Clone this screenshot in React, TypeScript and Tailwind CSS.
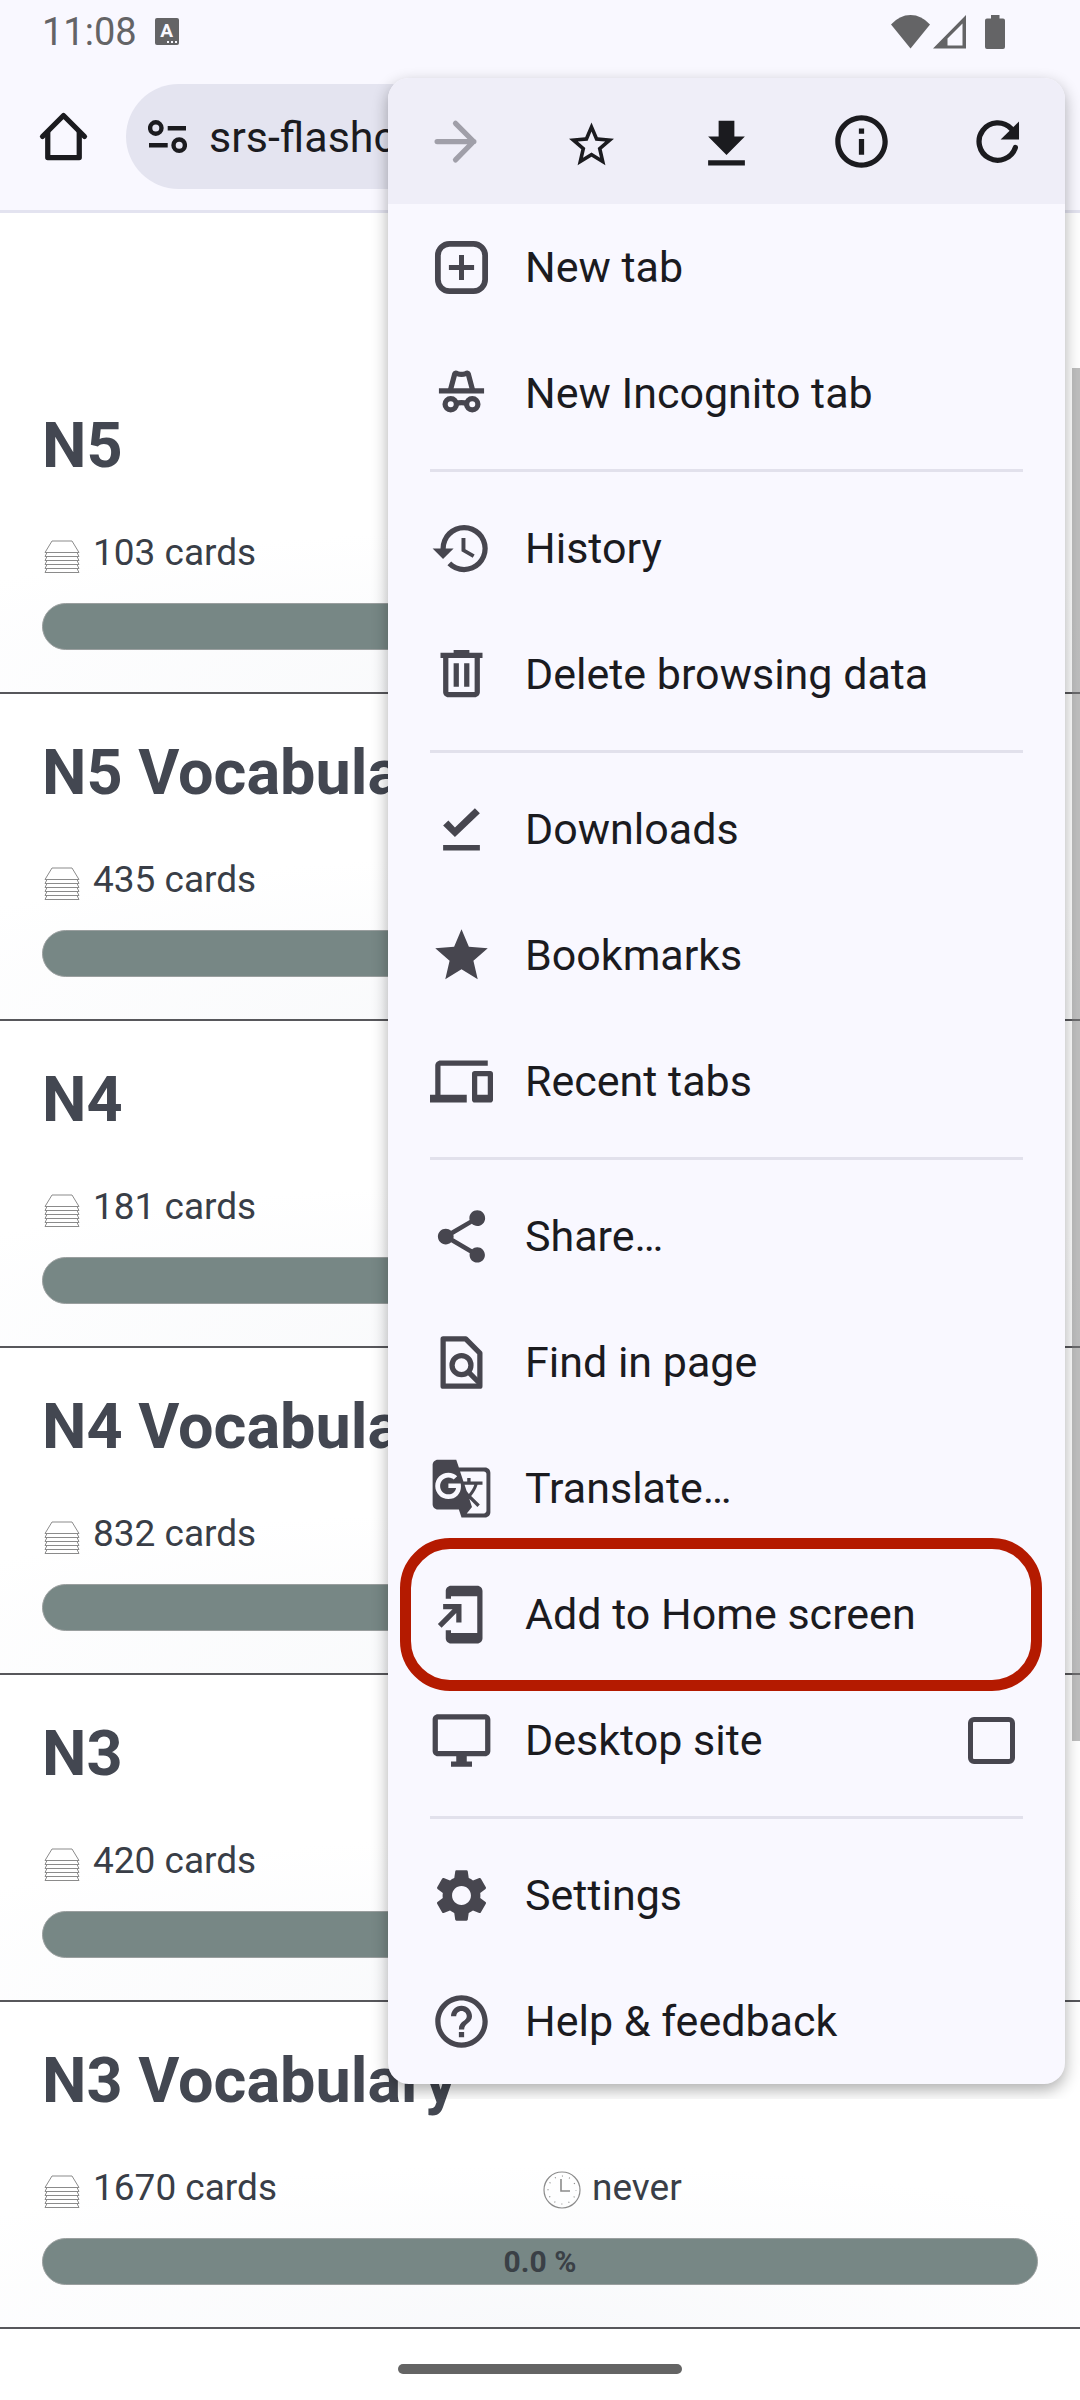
import React from "react";
import {
  MdAddToHomeScreen,
  MdDevices,
  MdGTranslate,
  MdHelpOutline,
  MdHistory,
  MdInfoOutline,
  MdSettings,
  MdShare,
  MdStar,
} from "react-icons/md";

const ICON = "size-[63px] shrink-0";

function HomeIcon() {
  return (
    <svg viewBox="0 0 24 24" className={ICON} fill="none" stroke="currentColor" strokeWidth="2" strokeLinecap="round" strokeLinejoin="round" aria-hidden="true">
      <path d="M4 12 12 4l8 8" />
      <path d="M6 10.5V20h12v-9.5" />
    </svg>
  );
}

function TuneIcon() {
  return (
    <svg viewBox="0 0 39 34" className="h-[34px] w-[39px] shrink-0" fill="none" stroke="currentColor" strokeWidth="4.4" aria-hidden="true">
      <circle cx="7.8" cy="8" r="5.7" />
      <path d="M19.7 8.2H38M1 25.2h18.7" />
      <circle cx="31.2" cy="25.2" r="5.7" />
    </svg>
  );
}

function ForwardIcon() {
  return (
    <svg viewBox="0 0 24 24" className={ICON} fill="none" stroke="currentColor" strokeWidth="2" strokeLinecap="round" strokeLinejoin="round" aria-hidden="true">
      <path d="M5 12h14M12 5.1 18.900 12 12 19" />
    </svg>
  );
}

function StarOutlineIcon() {
  return (
    <svg viewBox="-2 -3.5 28 28" className={ICON} fill="currentColor" aria-hidden="true">
      <path d="m22 9.24-7.19-.62L12 2 9.19 8.63 2 9.24l5.46 4.73L5.82 21 12 17.27 18.18 21l-1.63-7.03L22 9.24zM12 15.4l-3.76 2.27 1-4.28-3.32-2.88 4.38-.38L12 6.1l1.71 4.04 4.38.38-3.32 2.88 1 4.28L12 15.4z" />
    </svg>
  );
}

function DownloadIcon() {
  return (
    <svg viewBox="0 -1.1 24 24" className={ICON} fill="currentColor" aria-hidden="true">
      <path d="M19 9h-4V3H9v6H5l7 7 7-7zM5 18v2h14v-2H5z" />
    </svg>
  );
}

function RefreshIcon() {
  return (
    <svg viewBox="0 0 24 24" className={ICON} aria-hidden="true">
      <path d="M17.2 7.1A7.1 7.1 0 1 0 18.8 14.3" fill="none" stroke="currentColor" strokeWidth="2" strokeLinecap="round" />
      <path d="M20.2 4.4v6.8h-7z" fill="currentColor" />
    </svg>
  );
}

function NewTabIcon() {
  return (
    <svg viewBox="0 0 24 24" className={ICON} fill="none" stroke="currentColor" strokeWidth="2.2" aria-hidden="true">
      <rect x="3" y="3" width="18" height="18" rx="4.4" />
      <path d="M12 7.2v9.6M7.2 12h9.6" strokeWidth="1.9" />
    </svg>
  );
}

function IncognitoIcon() {
  return (
    <svg viewBox="0 0 24 24" className={ICON} fill="none" stroke="currentColor" strokeWidth="2" strokeLinejoin="round" aria-hidden="true">
      <path d="M3.4 11h17.2" />
      <path d="M7.7 11 9.4 4.6c.2-.5.6-.4 1-.2q1.6.7 3.2 0c.4-.2.8-.3 1 .2L16.3 11" />
      <circle cx="7.9" cy="16.1" r="2.15" />
      <circle cx="16.1" cy="16.1" r="2.15" />
      <path d="M9.8 15.9q2.2-.9 4.4 0" />
    </svg>
  );
}

function TrashIcon() {
  return (
    <svg viewBox="0 0 24 24" className={ICON} fill="currentColor" fillRule="evenodd" aria-hidden="true">
      <path d="M15 3.7v-1H9v1H4v2h1v13c0 1.1.9 2 2 2h10c1.100 0 2-.9 2-2v-13h1v-2zM17 18.700H7v-13h10z" />
      <path d="M9 7.700h2v9H9zM13 7.700h2v9h-2z" />
    </svg>
  );
}

function DownloadsIcon() {
  return (
    <svg viewBox="0 0 24 24" className={ICON} fill="currentColor" aria-hidden="true">
      <path d="M5 10.5 7 8.6l2.5 2.6L17.1 3.9 19 5.8 9.5 14.9zM5 17.9h14v2.1H5z" />
    </svg>
  );
}

function FindIcon() {
  return (
    <svg viewBox="0 0 24 24" className={ICON} fill="none" stroke="currentColor" strokeWidth="2" strokeLinejoin="round" aria-hidden="true">
      <path d="M5 3h8.6L19 8.4V21H5z" />
      <circle cx="12" cy="13" r="3.6" />
      <path d="m14.6 15.6 4.4 4.4" />
    </svg>
  );
}

function DesktopIcon() {
  return (
    <svg viewBox="0 0 24 24" className={ICON} fill="currentColor" fillRule="evenodd" aria-hidden="true">
      <path d="M21 2H3c-1.1 0-2 .9-2 2v12c0 1.100.9 2 2 2h7v2H8v2h8v-2h-2v-2h7c1.100 0 2-.9 2-2V4c0-1.100-.9-2-2-2zm0 14H3V4h18z" />
    </svg>
  );
}

function StackIcon() {
  return (
    <svg viewBox="0 0 36 34" className="h-[34px] w-9 shrink-0" fill="none" stroke="#8b8b8b" strokeWidth="1" aria-hidden="true">
      <path d="M1 12.5h34L28 1H8z" />
      <path d="m1 16.5 2-4M35 16.5l-2-4M1 16.5h34M1 20.5l2-4M35 20.5l-2-4M1 20.5h34M1 24.5l2-4M35 24.5l-2-4M1 24.5h34M1 28.5l2-4M35 28.5l-2-4M1 28.5h34M1 32.5l2-4M35 32.5l-2-4M1 32.5h34" />
    </svg>
  );
}

function ClockIcon() {
  return (
    <svg viewBox="0 0 38 38" className="size-[38px] shrink-0" fill="none" stroke="#8b8b8b" strokeWidth="1.2" aria-hidden="true">
      <circle cx="19" cy="19" r="18" />
      <circle cx="19" cy="19" r="14" strokeDasharray="1 6.33" strokeDashoffset="0.5" />
      <path d="M18 8v12h9" strokeWidth="1.6" />
    </svg>
  );
}

function StatusBar() {
  return (
    <div className="flex h-[63px] items-center justify-between pr-[75px] pl-[42px] text-[#646466]">
      <div className="flex items-center gap-[18px]">
        <span className="text-[38px] leading-[44px]">11:08</span>
        <span className="relative flex h-[27px] w-6 justify-center rounded-xs bg-[#646466] font-bold text-[#f9f8ff]">
          <span className="text-[19px] leading-[26px]">A</span>
          <svg viewBox="0 0 10 2" className="absolute right-[2px] bottom-[2px] h-[2px] w-[10px]" fill="currentColor" aria-hidden="true">
            <path d="M0 0h2v2H0zM4 0h2v2H4zM8 0h2v2H8z" />
          </svg>
        </span>
      </div>
      <div className="flex items-center">
        <svg viewBox="0 0 39 34" className="h-[34px] w-[39px]" fill="currentColor" aria-hidden="true">
          <path d="M0 9.5Q8.5 0 19.5 0T39 9.5l-19.500 24z" />
        </svg>
        <svg viewBox="0 0 33 34" className="ml-[3px] h-[34px] w-[33px]" fill="currentColor" fillRule="evenodd" aria-hidden="true">
          <path d="M33 0v33.5H0zM29.5 8.5l-15 15v7h15z" />
        </svg>
        <svg viewBox="0 0 20 34" className="ml-[19px] h-[34px] w-5" fill="currentColor" aria-hidden="true">
          <path d="M6 0h8.5v3.5H18a2 2 0 0 1 2 2V32a2 2 0 0 1-2 2H2a2 2 0 0 1-2-2V5.500a2 2 0 0 1 2-2h4z" />
        </svg>
      </div>
    </div>
  );
}

function Toolbar() {
  return (
    <div className="flex items-center gap-[31px] border-b-[3px] border-[#e3e3f0] px-8 py-[21px] text-[#1b1b1f]">
      <button type="button" aria-label="Home">
        <HomeIcon />
      </button>
      <div className="flex h-[105px] flex-1 items-center gap-[22px] rounded-full bg-[#e4e4f0] pr-10 pl-[22px]">
        <TuneIcon />
        <input
          type="text"
          aria-label="Address"
          defaultValue="srs-flashcards"
          className="w-full min-w-0 flex-1 bg-transparent text-[43px] leading-[52px] outline-none"
        />
      </div>
    </div>
  );
}

type Deck = { name: string; cards: number; lastStudied?: string; progress?: string };

const DECKS: Deck[] = [
  { name: "N5", cards: 103 },
  { name: "N5 Vocabulary", cards: 435 },
  { name: "N4", cards: 181 },
  { name: "N4 Vocabulary", cards: 832 },
  { name: "N3", cards: 420 },
  { name: "N3 Vocabulary", cards: 1670, lastStudied: "never", progress: "0.0 %" },
];

function DeckRow({ name, cards, lastStudied, progress }: Deck) {
  return (
    <li className="border-b-2 border-[#57575b] bg-[radial-gradient(ellipse_70%_50%_at_50%_100%,#f8f9fb,#ffffff)] px-[42px] pt-[43px] pb-[42px]">
      <h2 className="text-[63px] leading-[72px] font-bold text-[#434751]">{name}</h2>
      <div className="mt-[47px] grid grid-cols-2 text-[37px] leading-[48px] text-[#393e47]">
        <span className="flex items-center gap-[13px] pl-[2px]">
          <span className="pt-2">
            <StackIcon />
          </span>
          {cards} cards
        </span>
        {lastStudied && (
          <span className="flex items-center gap-[11px] pl-[3px]">
            <span className="pt-1">
              <ClockIcon />
            </span>
            {lastStudied}
          </span>
        )}
      </div>
      <div
        role="progressbar"
        aria-label={name}
        aria-valuenow={0}
        className="mt-[26px] flex h-[47px] items-center justify-center rounded-full border border-[#9a9f9f] bg-[#778785] text-[30px] font-bold text-[#3a4046]"
      >
        {progress}
      </div>
    </li>
  );
}

function MenuItem({ icon, label }: { icon: React.ReactNode; label: string }) {
  return (
    <button type="button" className="flex h-[126px] w-full items-center gap-8 px-[42px] text-left">
      <span className="text-[#47464f]">{icon}</span>
      {label}
    </button>
  );
}

function Divider() {
  return <hr className="mx-[42px] my-[13px] border-t-[3px] border-[#e2e1ec]" />;
}

function Menu() {
  return (
    <div className="absolute top-0 right-0 overflow-hidden pt-[78px] pr-[15px] pb-[15px] pl-8">
      <nav aria-label="Browser menu" className="w-[677px] rounded-[21px] bg-[#f9f8ff] text-[43px] leading-[52px] text-[#1b1b1f] shadow-[0_6px_16px_rgba(0,0,0,0.32)]">
        <div className="grid h-[126px] grid-cols-5 place-items-center rounded-t-[21px] bg-[#efeef8]">
          <button type="button" aria-label="Forward" className="text-[#a09fa9]">
            <ForwardIcon />
          </button>
          <button type="button" aria-label="Bookmark">
            <StarOutlineIcon />
          </button>
          <button type="button" aria-label="Download">
            <DownloadIcon />
          </button>
          <button type="button" aria-label="Page info">
            <MdInfoOutline className={ICON} />
          </button>
          <button type="button" aria-label="Refresh">
            <RefreshIcon />
          </button>
        </div>
        <MenuItem icon={<NewTabIcon />} label="New tab" />
        <MenuItem icon={<IncognitoIcon />} label="New Incognito tab" />
        <Divider />
        <MenuItem icon={<MdHistory className={ICON} />} label="History" />
        <MenuItem icon={<TrashIcon />} label="Delete browsing data" />
        <Divider />
        <MenuItem icon={<DownloadsIcon />} label="Downloads" />
        <MenuItem icon={<MdStar className={ICON} />} label="Bookmarks" />
        <MenuItem icon={<MdDevices className={ICON} />} label="Recent tabs" />
        <Divider />
        <MenuItem icon={<MdShare className={ICON} />} label="Share…" />
        <MenuItem icon={<FindIcon />} label="Find in page" />
        <MenuItem icon={<MdGTranslate className={ICON} />} label="Translate…" />
        <div className="relative">
          <MenuItem icon={<MdAddToHomeScreen className={ICON} />} label="Add to Home screen" />
          <div className="pointer-events-none absolute -top-[13px] right-[23px] -bottom-[14px] left-3 rounded-[50px] border-[11px] border-[#b41a00]" />
        </div>
        <label className="flex h-[126px] items-center gap-8 pr-[50px] pl-[42px]">
          <span className="text-[#47464f]">
            <DesktopIcon />
          </span>
          <span className="flex-1">Desktop site</span>
          <input type="checkbox" className="size-[47px] appearance-none rounded-md border-5 border-[#47464f] checked:bg-[#47464f]" />
        </label>
        <Divider />
        <MenuItem icon={<MdSettings className={ICON} />} label="Settings" />
        <MenuItem icon={<MdHelpOutline className={ICON} />} label="Help & feedback" />
      </nav>
    </div>
  );
}

export default function App() {
  return (
    <div className="relative min-h-screen overflow-hidden bg-white font-[Roboto,sans-serif]">
      <header className="bg-[#f9f8ff]">
        <StatusBar />
        <Toolbar />
      </header>
      <main className="relative pt-[154px]">
        <ul>
          {DECKS.map((deck) => (
            <DeckRow key={deck.name} {...deck} />
          ))}
        </ul>
        <div className="absolute top-[155px] right-0 h-[1373px] w-2 bg-[#7d7d7d]/50" />
      </main>
      <div className="mx-auto mt-[35px] mb-[26px] h-[10px] w-[284px] rounded-full bg-[#646464]" />
      <Menu />
    </div>
  );
}
